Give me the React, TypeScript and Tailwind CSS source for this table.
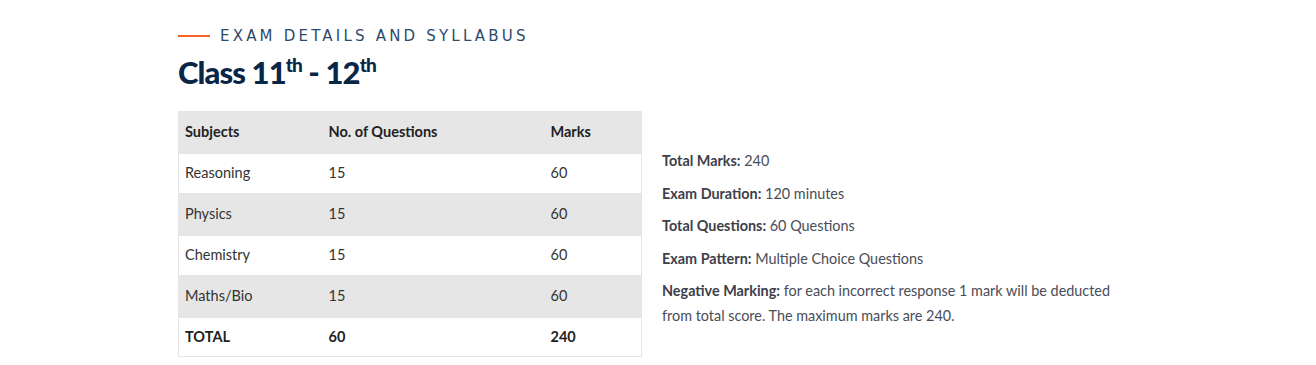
import React from "react";

const rows = [
  ["Reasoning", "15", "60"],
  ["Physics", "15", "60"],
  ["Chemistry", "15", "60"],
  ["Maths/Bio", "15", "60"],
];

export default function App() {
  const body = { fontFamily: "Lato, 'Open Sans', sans-serif" };
  return (
    <div className="w-[1316px] h-[365px] bg-white overflow-hidden" style={body}>
      <div className="pl-[178px] pt-[26px]">
        <div className="flex items-center gap-[10px] h-[20px]">
          <div className="w-[32px] h-[2px] bg-[#f26522]" />
          <div
            className="text-[15px] tracking-[3.2px] text-[#2c4a6b] leading-[20px] whitespace-nowrap"
            style={{ fontFamily: "'DejaVu Sans', sans-serif" }}
          >
            EXAM DETAILS AND SYLLABUS
          </div>
        </div>
        <h1
          className="mt-[6px] h-[40px] text-[31px] font-black text-[#0a2647] leading-[40px] tracking-[-0.9px] whitespace-nowrap"
          style={{ fontFamily: "Lato, sans-serif" }}
        >
          Class 11<span className="text-[19px] leading-none relative top-[-12px]">th</span> - 12
          <span className="text-[19px] leading-none relative top-[-12px]">th</span>
        </h1>
        <div className="flex mt-[19px] items-start">
          <table className="w-[464px] border-collapse border border-[#e3e5e8] text-[14.5px] text-[#333]">
            <colgroup>
              <col className="w-[144px]" />
              <col className="w-[222px]" />
              <col />
            </colgroup>
            <thead>
              <tr className="bg-[#e6e6e6] h-[41px]">
                <th className="text-left font-bold pl-[6px] text-[#222]">Subjects</th>
                <th className="text-left font-bold pl-[6px] text-[#222]">No. of Questions</th>
                <th className="text-left font-bold pl-[6px] text-[#222]">Marks</th>
              </tr>
            </thead>
            <tbody>
              {rows.map((r, i) => (
                <tr
                  key={r[0]}
                  className={`h-[41px] border-t-2 border-[#e3e5e8] ${i % 2 === 1 ? "bg-[#e6e6e6]" : "bg-white"}`}
                >
                  {r.map((c, j) => (
                    <td key={j} className="pl-[6px]">{c}</td>
                  ))}
                </tr>
              ))}
              <tr className="h-[40px] border-t-2 border-[#e3e5e8] font-bold text-[#222]">
                <td className="pl-[6px]">TOTAL</td>
                <td className="pl-[6px]">60</td>
                <td className="pl-[6px]">240</td>
              </tr>
            </tbody>
          </table>
          <div className="ml-[20px] mt-[37px] w-[460px] text-[14.4px] text-[#4a4d57] leading-[25px]">
            <p><b className="text-[#3d404a]">Total Marks:</b> 240</p>
            <p className="mt-[7.5px]"><b className="text-[#3d404a]">Exam Duration:</b> 120 minutes</p>
            <p className="mt-[7.5px]"><b className="text-[#3d404a]">Total Questions:</b> 60 Questions</p>
            <p className="mt-[7.5px]"><b className="text-[#3d404a]">Exam Pattern:</b> Multiple Choice Questions</p>
            <p className="mt-[7.5px]">
              <b className="text-[#3d404a]">Negative Marking:</b> for each incorrect response 1 mark will be deducted from total score. The maximum marks are 240.
            </p>
          </div>
        </div>
      </div>
    </div>
  );
}
